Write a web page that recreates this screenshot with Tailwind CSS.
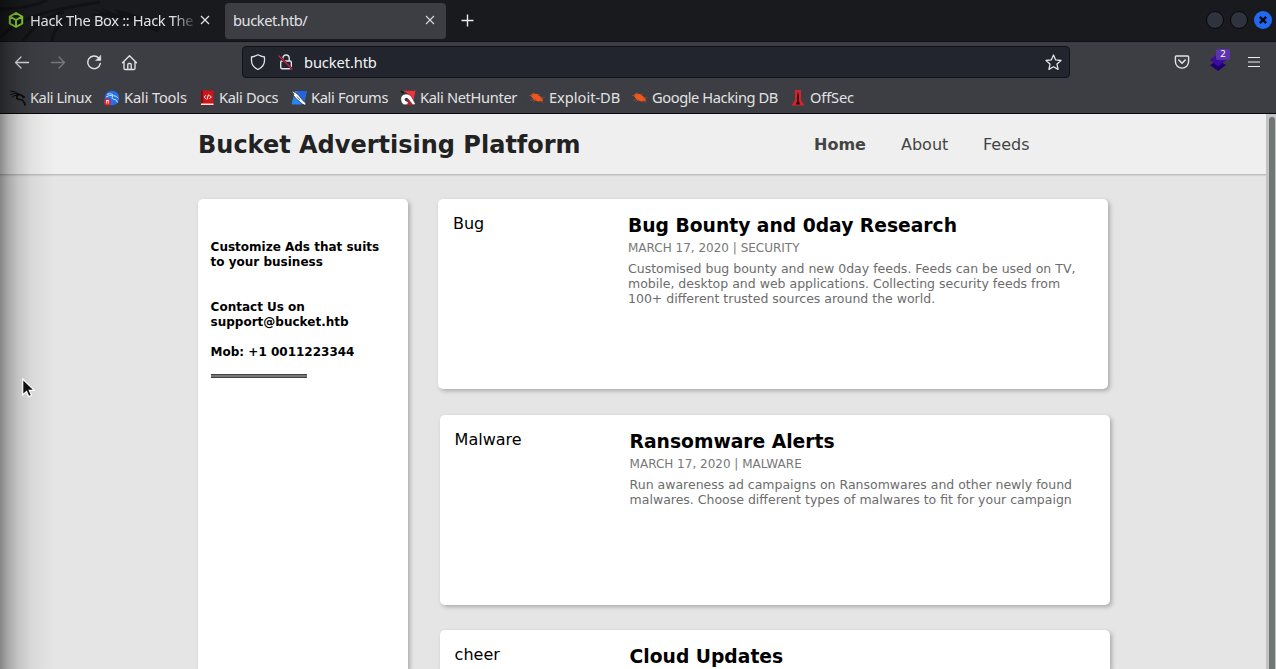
<!DOCTYPE html>
<html lang="en">
<head>
<meta charset="utf-8">
<title>bucket.htb/</title>
<script src="https://cdn.jsdelivr.net/npm/@tailwindcss/browser@4"></script>
</head>
<body>
<div class="relative flex h-[669px] w-[1276px] flex-col overflow-hidden bg-[#e5e5e5] font-['DejaVu_Sans',sans-serif]">

<div class="relative flex h-[114px] shrink-0 flex-col border-b border-[#08080c] bg-[#3d3e43] font-['Noto_Sans',sans-serif] text-[14.67px] text-[#e2e2e4]">
  <!-- Tab strip -->
  <div class="relative flex h-[42px] shrink-0 items-center border-b border-[#101114] bg-[#191a1d]">
    <svg class="absolute left-0 top-0" width="165" height="41" viewBox="0 0 165 41" fill="none" stroke="#111215">
      <path d="M0 9Q28 9 48 0M0 37Q20 19 44 13T100 2M23 41Q40 17 64 12M52 41Q54 26 68 18" stroke-width="3"/>
      <path d="M90 8l17 5-6-5 18 7-5-6q26 5 46 18l-2 6q-30-17-68-18l12-2z" fill="#111215" stroke="none"/>
    </svg>
    <svg class="relative -top-px ml-2" width="16" height="16" viewBox="0 0 16 16" fill="none" stroke="#8ad22e" stroke-width="2" stroke-linejoin="round"><path d="M8 1l6.200 3.500v7L8 15l-6.200-3.500v-7zM2 4.600l6 3.400 6-3.400M8 8v7"/></svg>
    <div class="relative -top-px ml-[6px] w-[168px] whitespace-nowrap tracking-[-0.350px] mask-r-from-85% mask-r-to-100%">Hack The Box :: Hack The B</div>
    <svg class="relative -top-px ml-[2px]" width="10" height="10" viewBox="0 0 10 10" stroke="#e4e4e6" stroke-width="1.2"><path d="M1 1l8 8M9 1L1 9"/></svg>
    <div class="ml-[15px] flex h-9 w-[221px] items-center rounded-[4px] bg-[#3d3e43] pl-2 pr-[11px]">
      <span class="flex-1 pb-px tracking-[-0.45px]">bucket.htb/</span>
      <svg class="relative -top-px" width="10" height="10" viewBox="0 0 10 10" stroke="#d8d8da" stroke-width="1.1"><path d="M1 1l8 8M9 1L1 9"/></svg>
    </div>
    <svg class="ml-[15px]" width="13" height="13" viewBox="0 0 13 13" stroke="#ececee" stroke-width="1.4"><path d="M6.500 .5v12M.5 6.500h12"/></svg>
    <div class="ml-auto mr-[4px] flex items-center gap-[6px] pb-px">
      <span class="size-[18px] rounded-full border border-[#07080a] bg-[#2f333e]"></span>
      <span class="size-[18px] rounded-full border border-[#07080a] bg-[#2f333e]"></span>
      <svg width="18" height="18" viewBox="0 0 18 18"><circle cx="9" cy="9" r="9" fill="#2468f2"/><path d="M5.800 5.800l6.400 6.400M12.200 5.800l-6.400 6.400" stroke="#0b0d14" stroke-width="2.400"/></svg>
    </div>
  </div>

  <!-- Navigation bar -->
  <div class="flex h-[40px] shrink-0 items-center text-[#e2e2e4]">
    <svg class="ml-[14px]" width="16" height="16" viewBox="0 0 16 16" fill="none" stroke="currentColor" stroke-width="1.3" stroke-linecap="round" stroke-linejoin="round"><path d="M14.500 8.500H1.500M7 3L1.500 8.500 7 14"/></svg>
    <svg class="ml-5 text-[#77787c]" width="16" height="16" viewBox="0 0 16 16" fill="none" stroke="currentColor" stroke-width="1.3" stroke-linecap="round" stroke-linejoin="round"><path d="M1.500 8.500h13M9 3l5.500 5.500L9 14"/></svg>
    <svg class="ml-5" width="16" height="16" viewBox="0 0 16 16" fill="none" stroke="currentColor" stroke-width="1.400" stroke-linecap="round"><path d="M12.700 4A6.300 6.300 0 1 0 14.300 9.500"/><path d="M14.800 1.500v5H9.800z" fill="currentColor" stroke-width=".5"/></svg>
    <svg class="ml-[19px]" width="17" height="17" viewBox="0 0 17 17" fill="none" stroke="currentColor" stroke-width="1.350" stroke-linecap="round" stroke-linejoin="round"><path d="M1.500 8.700l7-7 7 7M3 7.500v6.700q0 1.300 1.300 1.300h8.400q1.300 0 1.300-1.300V7.500M6.800 15v-4.500q0-1 1-1h1.400q1 0 1 1V15"/></svg>
    <div class="ml-[104px] flex h-8 w-[828px] items-center rounded-[4px] border border-[#111217] bg-[#22252e] px-[7px]">
      <svg width="16" height="16" viewBox="0 0 16 16" fill="none" stroke="currentColor" stroke-width="1.300" stroke-linejoin="round"><path d="M8 .8Q11 2.400 14.500 3v3.500q0 6-6.500 9-6.500-3-6.500-9V3Q5 2.400 8 .8z"/></svg>
      <svg class="ml-3" width="16" height="16" viewBox="0 0 16 16" fill="none" stroke="currentColor" stroke-width="1.400" stroke-linecap="round"><path d="M4.800 7V4.200a3.200 3.200 0 0 1 6.400 0V7M4 7h8q1.300 0 1.300 1.300v5q0 1.500-1.500 1.500H4.200q-1.500 0-1.500-1.500v-5Q2.700 7 4 7z"/><path d="M1.500 2.500l12.500 12.500" stroke="#22252e" stroke-width="2.400"/><path d="M1 2l13 13" stroke="#e5194b" stroke-width="1.200"/></svg>
      <span class="ml-[10px] flex-1 tracking-[-0.1px] text-[#f4f4f5]">bucket.htb</span>
      <svg width="17" height="17" viewBox="0 0 17 17" fill="none" stroke="currentColor" stroke-width="1.300" stroke-linejoin="round"><path d="M8.500 1l2.200 4.900 5.300.6-4 3.600 1.100 5.300-4.600-2.700-4.600 2.700L5 10.100 1 6.500l5.300-.6z"/></svg>
    </div>
    <svg class="ml-[104px]" width="16" height="16" viewBox="0 0 16 16" fill="none" stroke="currentColor" stroke-width="1.400" stroke-linecap="round" stroke-linejoin="round"><path d="M2.300 2h11.400q.9 0 .9.900v4.600a6.600 6.600 0 0 1-13.200 0V2.900q0-.9.900-.9z"/><path d="M4.800 6L8 9.200 11.200 6" stroke-width="1.600"/></svg>
    <div class="relative ml-5 h-6 w-5">
      <svg class="absolute left-0 top-[3px]" width="16" height="19" viewBox="0 0 16 19"><path d="M0 12l8-4.500 8 4.500-8 6z" fill="#1c0070"/><path d="M0 7l8-6.500L16 7l-8 6.500z" fill="#3c0c9c"/></svg>
      <span class="absolute left-[6px] top-[-1px] flex h-[11px] w-[14px] items-center justify-center rounded-[2px] bg-[#5d34ae] text-[9.500px] text-white">2</span>
    </div>
    <svg class="ml-[18px]" width="12" height="12" viewBox="0 0 12 12" stroke="#ececee" stroke-width="1.200"><path d="M0 1.500h12M0 6h12M0 10.500h12"/></svg>
  </div>

  <!-- Bookmarks -->
  <div class="flex h-[31px] items-center whitespace-nowrap pl-[10px] [&_span]:pb-[2px]">
    <div class="flex w-[94px] items-center gap-1">
      <svg class="shrink-0" width="16" height="16" viewBox="0 0 16 16" fill="none" stroke="#0c0c0f" stroke-linecap="round"><path d="M.5 1q5 0 8 3M.5 4.500q4-2 8-.5M2 7q3-2.500 6-2" stroke-width="1"/><path d="M7 4.500q3-1 7 2.500l-1 .5M8.500 4.500Q4.500 9 9.500 9.500q4.500 0 5.500 5.500" stroke-width="1.700"/></svg>
      <span class="tracking-[-0.45px]">Kali Linux</span>
    </div>
    <div class="flex w-[95px] items-center gap-1">
      <svg class="shrink-0" width="16" height="16" viewBox="0 0 16 16"><circle cx="8" cy="8" r="7.300" fill="#2470ec"/><path d="M3 4.300q5-1.500 7 1.500 3 0 4 2.500M2 7q4-2.500 7-1.200-2.500 3 1 3.500 3 0 3.500 3.200" fill="none" stroke="#cfe2ff" stroke-width="1"/><circle cx="3.500" cy="12" r="3.500" fill="#dc2735"/><path d="M2 10.500h3M2.700 10.500v3M4.300 10.500v3" stroke="#fff" stroke-width=".8"/></svg>
      <span class="tracking-[-0.15px]">Kali Tools</span>
    </div>
    <div class="flex w-[92px] items-center gap-1">
      <svg class="shrink-0" width="16" height="16" viewBox="0 0 16 16"><path d="M2 .5h12.500v13H2z" fill="#ce1518"/><path d="M2 .5h2v13H2z" fill="#850b10"/><path d="M2 13.500h12.500V15H2z" fill="#eee"/><path d="M2 15h12.500v.8H2z" fill="#a30d12"/><path d="M7 5.200L5.200 7 7 8.800M10.500 5.200L12.300 7l-1.800 1.800M9.500 4.500L8 9.500" fill="none" stroke="#fff" stroke-width="1"/></svg>
      <span class="tracking-[-0.35px]">Kali Docs</span>
    </div>
    <div class="flex w-[109px] items-center gap-1">
      <svg class="shrink-0" width="16" height="16" viewBox="0 0 16 16"><path d="M4 1h11q1 0 .7 1L13 13l-3 1.500H2q-1.500 0-1.200-1.500z" fill="#2686f3"/><path d="M5 1h10.500L13 11z" fill="#2364dc"/><path d="M.3.5l4 2 3 2.200 2.500 3.300q2 3 5.200 5l-.5 2.500q-3.500-1-6-4l-3-2.500L2 5l1-.5z" fill="#fff" stroke="#17202f" stroke-width=".7"/><path d="M6 6.500l3 3.500" stroke="#17202f" stroke-width=".7"/></svg>
      <span class="tracking-[-0.35px]">Kali Forums</span>
    </div>
    <div class="flex w-[129px] items-center gap-1">
      <svg class="shrink-0" width="16" height="16" viewBox="0 0 16 16"><path d="M3.500.7h12L13.500 11 8 4z" fill="#f0323a"/><path d="M4 15h8l3-2-3-5-5 2z" fill="#c81830"/><path d="M.8 9.500q-.3-5 5.200-5.500 4.500 0 6.500 4.500l3 5.500-2.500 1-4-5Q7.500 7.500 5.500 8.300q-1.500 1.700.5 2.700l2.500 1.500L7 14.800H4Q1 13.500.8 9.500z" fill="#fff" stroke="#222" stroke-width=".5"/><path d="M.8 1l3 2.500" stroke="#111" stroke-width="1.500"/></svg>
      <span class="tracking-[-0.35px]">Kali NetHunter</span>
    </div>
    <div class="flex w-[103px] items-center gap-1">
      <svg class="shrink-0" width="16" height="16" viewBox="0 0 16 16"><path d="M1.500 5.500l2-2 5 .5 4.500 4 1 3-4.500.5-4.500-1.500z" fill="#ee5820"/><path d="M0 5.500h4M1.500 10.500l4-1.500M5 2l1 3M11 3.500L9 6M15.500 7.500l-4 1M14.500 13L11 10M4 12l3-3" stroke="#a84a28" stroke-width=".7"/></svg>
      <span class="tracking-[-0.03px]">Exploit-DB</span>
    </div>
    <div class="flex w-[158px] items-center gap-1">
      <svg class="shrink-0" width="16" height="16" viewBox="0 0 16 16"><path d="M1.500 5.500l2-2 5 .5 4.500 4 1 3-4.500.5-4.500-1.500z" fill="#ee5820"/><path d="M0 5.500h4M1.500 10.500l4-1.500M5 2l1 3M11 3.500L9 6M15.500 7.500l-4 1M14.500 13L11 10M4 12l3-3" stroke="#a84a28" stroke-width=".7"/></svg>
      <span class="tracking-[-0.42px]">Google Hacking DB</span>
    </div>
    <div class="flex items-center gap-1">
      <svg class="shrink-0" width="16" height="16" viewBox="0 0 16 16"><path d="M5 0h6v10l3.500 5.500h-13L5 10z" fill="#d6222a"/><path d="M8 1.500L9 6l-.3 4 1.300 4.500H6L7.300 10 7 6z" fill="#260b0d"/></svg>
      <span class="tracking-[-0.15px]">OffSec</span>
    </div>
  </div>
</div>

<!-- Web page -->
<div class="flex h-[555px] shrink-0">
  <div class="w-[1266px] shrink-0">
    <header class="flex h-[61px] items-center border-b border-[#bebebe] bg-[#efefef] pl-[198px] pt-[2px] shadow-[0_1px_1px_#d2d2d2]">
      <h1 class="w-[616px] whitespace-nowrap text-[24px] font-bold text-[#222]">Bucket Advertising Platform</h1>
      <nav class="flex text-base text-[#444]">
        <a class="w-[87px] font-bold">Home</a><a class="w-[82px]">About</a><a>Feeds</a>
      </nav>
    </header>
    <main class="flex items-start pl-[198px] pt-6">
      <aside class="h-[470px] w-[210px] shrink-0 rounded-t-[5px] bg-white pl-[12.600px] pt-[41px] text-[12px] font-bold leading-[15px] text-black shadow-[2px_2px_4px_#aaaaaa]">
        <p>Customize Ads that suits<br>to your business</p>
        <p class="mt-[30px]">Contact Us on<br>support@bucket.htb</p>
        <p class="mt-[15px]">Mob: +1 0011223344</p>
        <div class="mt-[14px] h-1 w-24 border-y border-[#444] bg-[#777]"></div>
      </aside>
      <div class="ml-[30px] flex flex-col text-black">
        <article class="flex h-[190px] w-[670px] rounded-[5px] bg-white pl-[15px] pt-[13px] shadow-[2px_2px_4px_#aaaaaa]">
          <div class="w-[175px] text-base leading-6">Bug</div>
          <div class="whitespace-nowrap text-[12.500px] leading-[15px] text-[#6c6c6c]">
            <h2 class="text-[18.720px] font-bold leading-[28px] text-black">Bug Bounty and 0day Research</h2>
            <p class="mt-px text-[12px] text-[#777]">MARCH 17, 2020 | SECURITY</p>
            <p class="mt-[5px]">Customised bug bounty and new 0day feeds. Feeds can be used on TV,<br>mobile, desktop and web applications. Collecting security feeds from<br>100+ different trusted sources around the world.</p>
          </div>
        </article>
        <article class="ml-[2px] mt-[26px] flex h-[190px] w-[670px] rounded-[5px] bg-white pl-[14.600px] pt-[13px] shadow-[2px_2px_4px_#aaaaaa]">
          <div class="w-[175px] text-base leading-6">Malware</div>
          <div class="whitespace-nowrap text-[12.500px] leading-[15px] text-[#6c6c6c]">
            <h2 class="text-[18.720px] font-bold leading-[28px] text-black">Ransomware Alerts</h2>
            <p class="mt-px text-[12px] text-[#777]">MARCH 17, 2020 | MALWARE</p>
            <p class="mt-[5px]">Run awareness ad campaigns on Ransomwares and other newly found<br>malwares. Choose different types of malwares to fit for your campaign</p>
          </div>
        </article>
        <article class="ml-[2px] mt-[25px] flex h-[39px] w-[670px] rounded-t-[5px] bg-white pl-[14.600px] pt-[13px] shadow-[2px_2px_4px_#aaaaaa]">
          <div class="w-[175px] text-base leading-6">cheer</div>
          <h2 class="text-[18.720px] font-bold leading-[28px]">Cloud Updates</h2>
        </article>
      </div>
    </main>
  </div>
  <div class="h-[555px] w-[10px] bg-[#c2c3c3] pl-[3px] pt-[3px]"><div class="h-[552px] w-[6px] rounded-t-[3px] bg-[#717675]"></div></div>
</div>

<div class="pointer-events-none absolute left-0 top-0 h-full w-[56px] bg-[linear-gradient(to_right,rgb(0_0_0/.42),rgb(0_0_0/.26)_15%,rgb(0_0_0/.14)_33%,rgb(0_0_0/.06)_55%,rgb(0_0_0/.02)_80%,transparent)]"></div>
<svg class="absolute left-[22px] top-[378px]" width="13" height="20" viewBox="0 0 13 20"><path d="M.7 1v16l3.800-3.600 2.300 5.200 2.800-1.200-2.300-5h5z" fill="#111" stroke="#fff" stroke-width="1.200"/></svg>
</div>
</body>
</html>
